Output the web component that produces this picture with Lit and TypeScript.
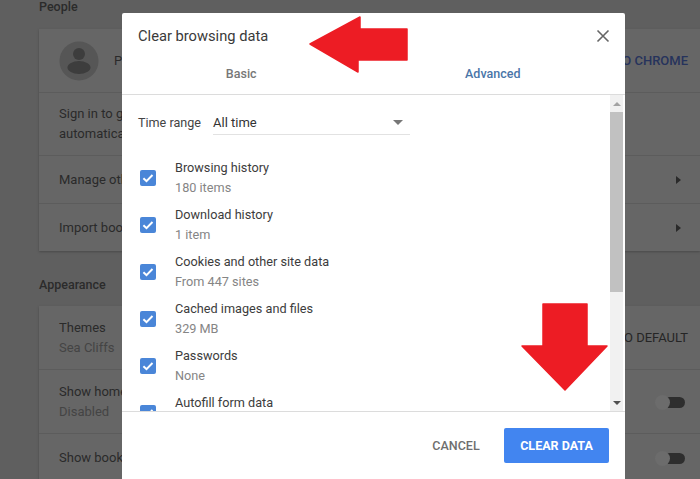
import { LitElement, html, css, svg } from 'lit'
import { customElement } from 'lit/decorators.js'

const items = [
  ['Browsing history', '180 items'],
  ['Download history', '1 item'],
  ['Cookies and other site data', 'From 447 sites'],
  ['Cached images and files', '329 MB'],
  ['Passwords', 'None'],
  ['Autofill form data', ''],
]

const check = svg`<svg class="cb" viewBox="0 0 16 16" width="16" height="16">
  <rect width="16" height="16" rx="2" fill="#4a86d8"/>
  <path d="M3.4 8.2l3.1 3 6-6.2" fill="none" stroke="#fff" stroke-width="2"/>
</svg>`

const toggle = html`<div class="toggle"><i></i><b></b></div>`
const caret = html`<div class="caret"></div>`

@customElement('app-root')
export class AppRoot extends LitElement {
  static styles = css`
    :host {
      display: block;
      position: relative;
      width: 700px;
      height: 479px;
      overflow: hidden;
      background: #5f5f5f;
      font-family: Roboto, "Liberation Sans", sans-serif;
      font-size: 13px;
      color: #2a2a2a;
    }

    /* settings page behind the dialog */
    .page { padding-left: 39px; display: flex; flex-direction: column; }
    .heading { height: 29px; box-sizing: border-box; color: #2b2b2b; line-height: 13px; font-weight: 500; font-size: 12.5px; }
    .heading.second { height: 55px; padding-top: 26px; line-height: 16px; }
    .card { background: #666; box-shadow: 0 1px 2px #4a4a4a; display: flex; flex-direction: column; }
    .row {
      display: flex;
      align-items: center;
      justify-content: space-between;
      padding: 0 12px 0 20px;
      border-top: 1px solid #5c5c5c;
      box-sizing: border-box;
      line-height: 20px;
    }
    .row:first-child { border-top: 0; }
    .h63 { height: 63px; }
    .h48 { height: 48px; }
    .h64 { height: 64px; }
    .sub { color: #444; }
    .who { display: flex; align-items: center; gap: 15px; }
    .avatar { width: 40px; height: 40px; }
    .link { font-weight: 500; color: #26335c; font-size: 13px; }
    .plain { font-weight: 400; color: #252525; font-size: 13px; }
    .caret { width: 0; height: 0; border: 4px solid transparent; border-left: 5px solid #2a2a2a; border-right: 0; margin-right: 7px; }
    .toggle { position: relative; width: 30px; height: 12px; margin-right: 3px; }
    .toggle b { position: absolute; left: 8px; right: 0; top: 1px; height: 11px; border-radius: 6px; background: #2e2e2e; }
    .toggle i { position: absolute; left: 0; top: -1px; width: 15px; height: 15px; border-radius: 50%; background: #6c6c6c; z-index: 1; }

    /* dialog */
    .dialog {
      position: absolute;
      left: 122px;
      top: 13px;
      width: 503px;
      height: 466px;
      background: #fff;
      border-radius: 2px 2px 0 0;
      display: flex;
      flex-direction: column;
      color: #333;
    }
    .head { height: 81px; border-bottom: 1px solid #dcdcdc; display: flex; flex-direction: column; flex: none; }
    .title-row { height: 45px; padding: 0 16px; display: flex; align-items: center; justify-content: space-between; }
    .title { font-size: 14.7px; color: #3a3a3a; }
    .close { width: 14px; height: 14px; margin-right: -1px; }
    .tabs { display: grid; grid-template-columns: 1fr 1fr; height: 30px; font-weight: 500; font-size: 12.5px; text-align: center; line-height: 32px; }
    .tabs div:first-child { color: #777; padding-right: 13px; }
    .tabs div:last-child { color: #4a76a8; padding-right: 13px; }

    .body { flex: none; height: 316px; display: flex; border-bottom: 1px solid #dcdcdc; box-sizing: content-box; }
    .scroll { flex: 1; overflow: hidden; padding: 16px; }
    .range { display: flex; height: 23px; align-items: flex-start; line-height: 23px; color: #333; }
    .range label { width: 75px; color: #444; font-size: 12.6px; }
    .select { width: 197px; height: 23px; border-bottom: 1px solid #e2e2e2; display: flex; justify-content: space-between; align-items: center; box-sizing: content-box; }
    .select span { color: #333; }
    .arrow { width: 0; height: 0; border: 5px solid transparent; border-top: 5px solid #777; border-bottom: 0; margin-right: 7px; }
    .list { margin-top: 23px; display: flex; flex-direction: column; gap: 7px; }
    .item { display: flex; align-items: center; height: 40px; line-height: 20px; }
    .cb { flex: none; margin: 0 19px 0 2px; position: relative; top: 1px; }
    .texts { padding-top: 2px; }
    .item .t { color: #3c3c3c; font-size: 12.7px; }
    .item .s { color: #858585; font-size: 12.7px; min-height: 20px; }

    .bar { width: 13px; flex: none; background: #f1f1f1; display: flex; flex-direction: column; align-items: center; margin-right: 2px; }
    .bar .up, .bar .down { height: 17px; display: flex; align-items: center; justify-content: center; flex: none; }
    .up i { border: 4px solid transparent; border-bottom: 4px solid #a3a3a3; border-top: 0; }
    .down i { border: 4px solid transparent; border-top: 4px solid #505050; border-bottom: 0; }
    .thumb { width: 100%; height: 180px; background: #c1c1c1; flex: none; }
    .track { flex: 1; }

    .foot { flex: 1; display: flex; justify-content: flex-end; align-items: flex-start; padding: 16px 16px 0 0; gap: 24px; }
    .foot button { font: 500 12.5px Roboto, "Liberation Sans", sans-serif; border: 0; background: none; height: 35px; padding: 0; border-radius: 2px; }
    .cancel { color: #6e6e6e; width: 48px; }
    .ok { background: #4285f0 !important; color: #fff; width: 105px; font-weight: 700 !important; }

    .arrows { position: absolute; left: 0; top: 0; pointer-events: none; }
  `

  render() {
    return html`
      <div class="page">
        <div class="heading">People</div>
        <div class="card">
          <div class="row h63">
            <div class="who">
              <svg class="avatar" viewBox="0 0 40 40">
                <circle cx="20" cy="20" r="19.5" fill="#565656"/>
                <circle cx="20" cy="13" r="6" fill="#3d3d3d"/>
                <ellipse cx="20" cy="26.5" rx="11.5" ry="6.5" fill="#3d3d3d"/>
              </svg>
              <span>P</span>
            </div>
            <span class="link">TO CHROME</span>
          </div>
          <div class="row h63"><div>Sign in to get<br />automatically</div></div>
          <div class="row h48"><span>Manage other</span>${caret}</div>
          <div class="row h48"><span>Import book</span>${caret}</div>
        </div>
        <div class="heading second">Appearance</div>
        <div class="card">
          <div class="row h63">
            <div>Themes<div class="sub">Sea Cliffs</div></div>
            <span class="plain">TO DEFAULT</span>
          </div>
          <div class="row h64">
            <div>Show home<div class="sub">Disabled</div></div>
            ${toggle}
          </div>
          <div class="row h48"><span>Show book</span>${toggle}</div>
        </div>
      </div>

      <div class="dialog">
        <div class="head">
          <div class="title-row">
            <span class="title">Clear browsing data</span>
            <svg class="close" viewBox="0 0 14 14"><path d="M1.5 1.5l11 11M12.5 1.5l-11 11" stroke="#666" stroke-width="1.6" fill="none"/></svg>
          </div>
          <div class="tabs"><div>Basic</div><div>Advanced</div></div>
        </div>
        <div class="body">
          <div class="scroll">
            <div class="range">
              <label>Time range</label>
              <div class="select"><span>All time</span><div class="arrow"></div></div>
            </div>
            <div class="list">
              ${items.map(([t, s]) => html`
                <div class="item">
                  ${check}
                  <div class="texts"><div class="t">${t}</div><div class="s">${s}</div></div>
                </div>
              `)}
            </div>
          </div>
          <div class="bar">
            <div class="up"><i></i></div>
            <div class="thumb"></div>
            <div class="track"></div>
            <div class="down"><i></i></div>
          </div>
        </div>
        <div class="foot">
          <button class="cancel">CANCEL</button>
          <button class="ok">CLEAR DATA</button>
        </div>
      </div>

      <svg class="arrows" width="700" height="479" viewBox="0 0 700 479">
        <path d="M310 44L360 17V29H407V60H358V72Z" fill="#ed1c24" stroke="#ed1c24" stroke-width="1.5" stroke-linejoin="round"/>
        <path d="M543 304H587V346H607L565 390L522 346H543Z" fill="#ed1c24" stroke="#ed1c24" stroke-width="1.5" stroke-linejoin="round"/>
      </svg>
    `
  }
}
